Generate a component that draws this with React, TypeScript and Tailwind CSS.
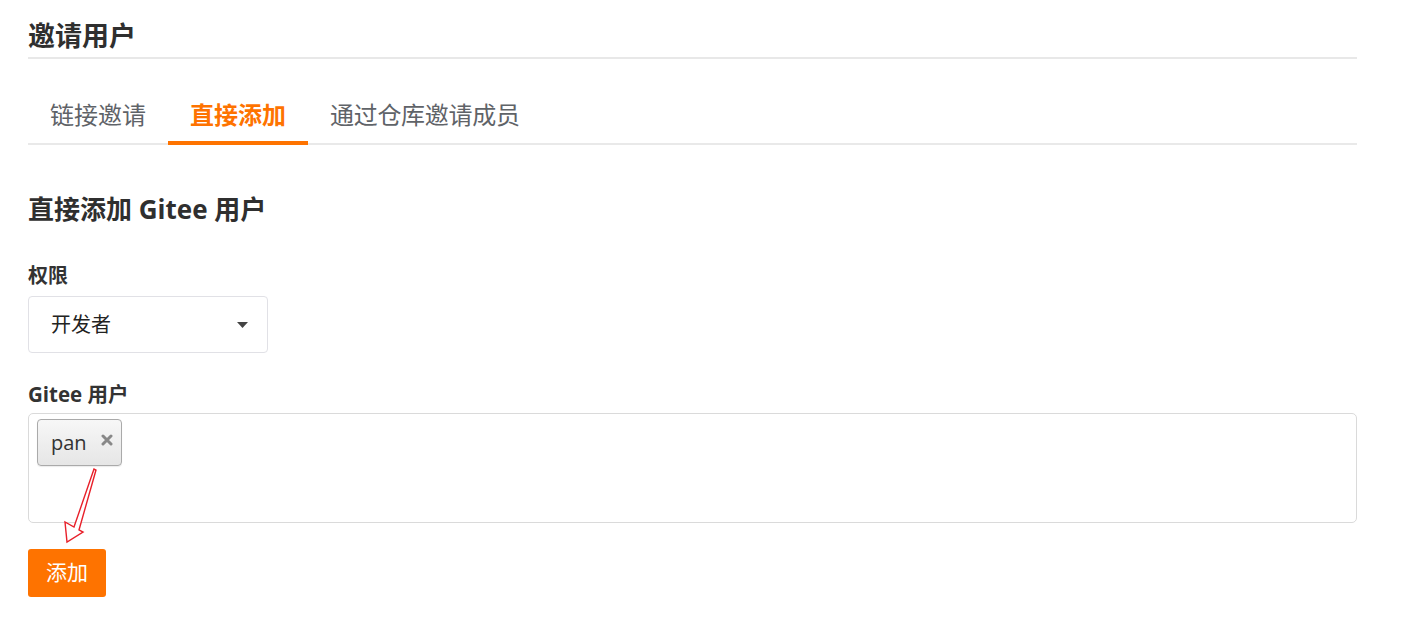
import React from "react";

export default function App() {
  const cjk = { fontFamily: '"Open Sans", "Noto Sans CJK SC", sans-serif' };
  return (
    <div className="relative w-[1407px] h-[620px] bg-white text-[#333]" style={cjk}>
      <div className="w-[1329px] ml-[28px]">
        <div className="pt-[14px] border-b-2 border-[#e8e8e8]">
          <h1 className="text-[27px] font-bold leading-[43px] text-[#2f2f2f]">邀请用户</h1>
        </div>

        <div className="mt-[40px] flex border-b-2 border-[#e9e9e9]">
          <div className="px-[22px] pb-[10px] leading-[32px] text-[24px] -mb-[2px] border-b-4 border-transparent text-[#5f6368]">链接邀请</div>
          <div className="px-[22px] pb-[10px] leading-[32px] text-[24px] -mb-[2px] border-b-4 border-[#fe7300] text-[#fe7300] font-bold">直接添加</div>
          <div className="pl-[22px] pb-[10px] leading-[32px] text-[24px] -mb-[2px] border-b-4 border-transparent text-[#5f6368] tracking-[-0.3px]">通过仓库邀请成员</div>
        </div>

        <h2 className="mt-[48px] text-[26px] font-bold leading-[32px] text-[#2f2f2f]">直接添加 Gitee 用户</h2>

        <div className="mt-[37px] text-[20px] font-bold leading-[28px] text-[#333]">权限</div>
        <div className="mt-[6px] w-[240px] h-[57px] border border-[#e1e1e6] rounded-[4px] flex items-center justify-between pl-[22px] pr-[19px]">
          <span className="text-[20px] text-[#222]">开发者</span>
          <svg width="11" height="6" viewBox="0 0 11 6"><path d="M0 0 L11 0 L5.5 6 Z" fill="#444" /></svg>
        </div>

        <div className="mt-[27px] text-[20.5px] font-bold leading-[28px] text-[#333]">Gitee 用户</div>
        <div className="mt-[5px] h-[110px] border border-[#dadada] rounded-[5px] pl-[8px] pt-[5px]">
          <div className="w-[85px] h-[47px] rounded-[4px] border border-[#aaaaaa] bg-gradient-to-b from-[#f7f7f7] to-[#e6e6e6] flex items-center pl-[13px] pr-[8px] justify-between shadow-[0_1px_1px_rgba(0,0,0,0.08)]">
            <span className="text-[20px] text-[#333] leading-none">pan</span>
            <svg width="12" height="12" viewBox="0 0 12 12" className="mb-[6px]">
              <path d="M2 2 L10 10 M10 2 L2 10" stroke="#888" strokeWidth="3" strokeLinecap="round" />
            </svg>
          </div>
        </div>

        <button className="mt-[26px] w-[78px] h-[48px] bg-[#fe7300] rounded-[3px] text-white text-[21px] flex items-center justify-center">添加</button>
      </div>

      <svg className="absolute left-0 top-0 pointer-events-none" width="1407" height="620" viewBox="0 0 1407 620">
        <polygon
          points="96,470 79,530 83,532 67,542 65,522 74,527 94,469"
          fill="white"
          stroke="#e8202a"
          strokeWidth="1.4"
          strokeLinejoin="miter"
        />
      </svg>
    </div>
  );
}
